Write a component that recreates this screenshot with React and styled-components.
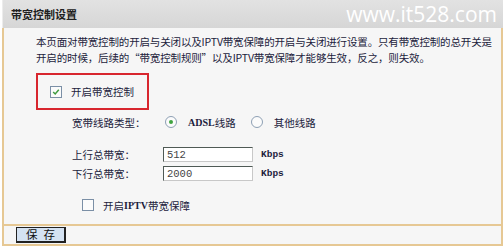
import React from 'react'
import styled, { createGlobalStyle } from 'styled-components'

const tan = '#e6c894'
const ink = '#1c1c3c'

const GlobalStyle = createGlobalStyle`
    body {
        margin : 0;
        background : #ffffff;
        font-family : "Noto Sans CJK SC", "Liberation Sans", sans-serif;
        font-size : 10.5px;
        color : ${ink};
    }
`

const Panel = styled.div`
    width : 501px;
    height : 246px;
    margin-left : 2px;
    display : flex;
    flex-direction : column;
`

const TitleBar = styled.div`
    height : 28px;
    flex-shrink : 0;
    display : flex;
    align-items : center;
    justify-content : space-between;
    padding : 0px 6px 0px 8px;
    background : linear-gradient(to bottom, #e2e2e2, #d6d6d6);
    border-left : 1px solid #ececec;
    box-sizing : border-box;
`

const Title = styled.span`
    font-size : 11px;
    font-weight : bold;
    color : #202020;
`

const Watermark = styled.span`
    font-family : "Open Sans", "Liberation Sans", sans-serif;
    font-size : 21px;
    color : #ffffff;
`

const Body = styled.div`
    flex : 1;
    display : flex;
    flex-direction : column;
    background : #f6f6f6;
    border-left : 2px solid ${tan};
    border-right : 2px solid ${tan};
    padding : 6px 0px 0px 32px;
`

const Intro = styled.p`
    margin : 0px;
    line-height : 16px;
    font-size : 10.5px;
    white-space : nowrap;
    letter-spacing : -0.15px;
`

const Highlight = styled.div`
    width : 113px;
    height : 37px;
    margin-top : 7px;
    border : 2px solid #d8262e;
    box-sizing : border-box;
    display : flex;
    align-items : center;
    padding-left : 12px;
    gap : 9px;
`

const Row = styled.div`
    display : flex;
    align-items : center;
    height : ${p => p.$h || 19}px;
    margin-top : ${p => p.$mt || 0}px;
    padding-left : ${p => p.$pl || 0}px;
`

const Label = styled.span`
    width : ${p => p.$w || 'auto'}px;
    flex-shrink : 0;
`

const Box = styled.span`
    width : 10px;
    height : 10px;
    border : 1px solid #7b8fa6;
    background : #fbfbfb;
    display : inline-flex;
    align-items : center;
    justify-content : center;
    flex-shrink : 0;
    margin-right : ${p => p.$mr || 0}px;
`

const Radio = styled.span`
    width : 10px;
    height : 10px;
    border : 1px solid #8ea0b4;
    border-radius : 50%;
    background : #fbfbfb;
    display : inline-flex;
    align-items : center;
    justify-content : center;
    margin-left : ${p => p.$ml || 0}px;
    margin-right : 11px;
    &::after {
        content : '';
        width : 4px;
        height : 4px;
        border-radius : 50%;
        background : ${p => p.$on ? '#3fa33f' : 'transparent'};
    }
`

const Latin = styled.span`
    font-family : "Liberation Serif", serif;
    font-size : 10px;
    font-weight : bold;
`

const Field = styled.input`
    width : 90px;
    height : 15px;
    padding : 0px 3px;
    box-sizing : border-box;
    border : 1px solid #4f5a55;
    border-right-color : #c8c8c8;
    border-bottom-color : #c8c8c8;
    background : #ffffff;
    font-family : "Liberation Mono", monospace;
    font-size : 10.5px;
    color : #444;
    outline : none;
`

const Unit = styled.span`
    margin-left : 8px;
    font-family : "Liberation Mono", monospace;
    font-size : 9.5px;
    font-weight : bold;
`

const Footer = styled.div`
    height : 18px;
    flex-shrink : 0;
    display : flex;
    align-items : center;
    padding-left : 12px;
    background : #f6f6f6;
    border : 2px solid ${tan};
`

const SaveButton = styled.button`
    width : 50px;
    height : 16px;
    padding : 0px;
    background : #d4e2f2;
    border : 1px solid #222;
    border-right-width : 2px;
    border-bottom-width : 2px;
    font-family : "Noto Sans CJK SC", sans-serif;
    font-size : 11.5px;
    letter-spacing : 6px;
    text-indent : 6px;
    color : #111;
    line-height : 13px;
`

const Check = () => (
    <svg width="8" height="8" viewBox="0 0 8 8">
        <path d="M1.2 4 L3.2 6 L6.8 1.8" fill="none" stroke="#3f9b3f" strokeWidth="1.5" />
    </svg>
)

const App = () => {
    return (
        <>
            <GlobalStyle />
            <Panel>
                <TitleBar>
                    <Title>带宽控制设置</Title>
                    <Watermark>www.it528.com</Watermark>
                </TitleBar>
                <Body>
                    <Intro>
                        本页面对带宽控制的开启与关闭以及IPTV带宽保障的开启与关闭进行设置。只有带宽控制的总开关是<br />
                        开启的时候，后续的“带宽控制规则”以及IPTV带宽保障才能够生效，反之，则失效。
                    </Intro>
                    <Highlight>
                        <Box><Check /></Box>
                        <span>开启带宽控制</span>
                    </Highlight>
                    <Row $mt={2} $pl={36} $h={20}>
                        <Label $w={93}>宽带线路类型：</Label>
                        <Radio $on />
                        <Latin>ADSL</Latin><span>线路</span>
                        <Radio $ml={15} />
                        <span>其他线路</span>
                    </Row>
                    <Row $mt={13} $pl={36}>
                        <Label $w={91}>上行总带宽：</Label>
                        <Field defaultValue="512" />
                        <Unit>Kbps</Unit>
                    </Row>
                    <Row $pl={36}>
                        <Label $w={91}>下行总带宽：</Label>
                        <Field defaultValue="2000" />
                        <Unit>Kbps</Unit>
                    </Row>
                    <Row $mt={12} $pl={46} $h={20}>
                        <Box $mr={9} />
                        <span>开启</span><Latin>IPTV</Latin><span>带宽保障</span>
                    </Row>
                </Body>
                <Footer>
                    <SaveButton>保存</SaveButton>
                </Footer>
            </Panel>
        </>
    )
}

export default App
